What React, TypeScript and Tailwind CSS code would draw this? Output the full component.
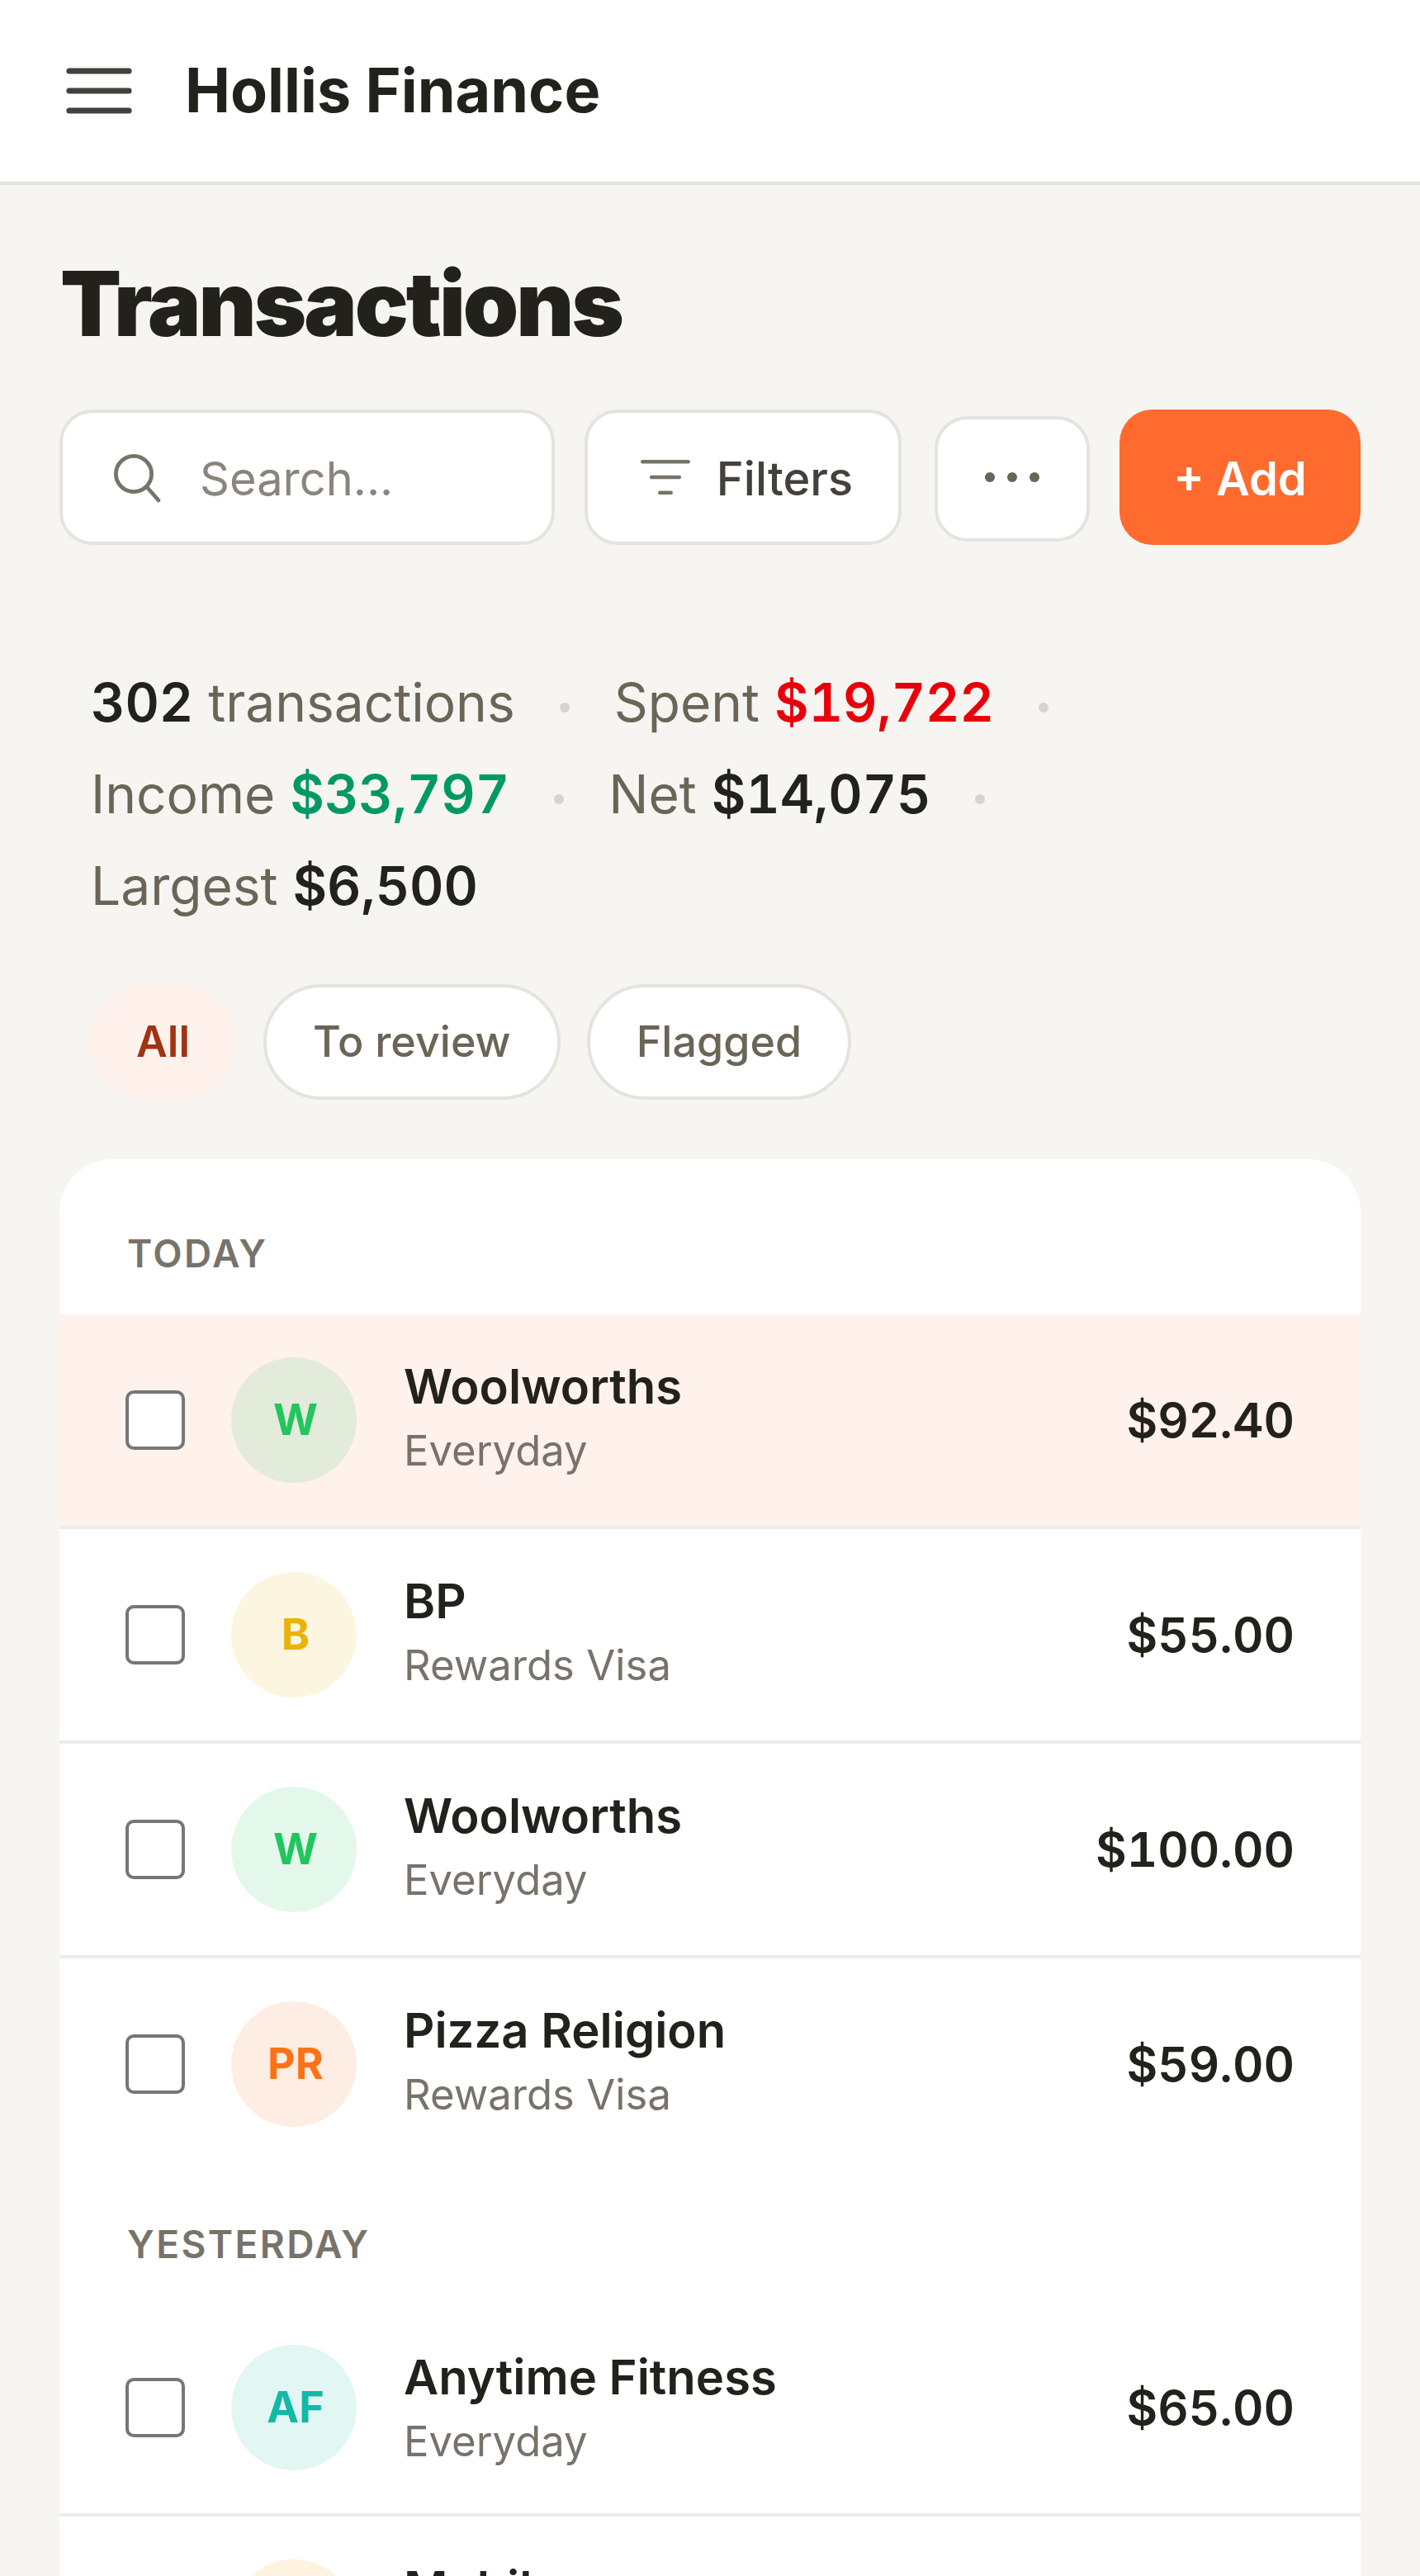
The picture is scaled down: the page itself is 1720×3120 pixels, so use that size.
const font = { fontFamily: "Inter, sans-serif" };

type Row = { initials: string; name: string; sub: string; amount: string; text: string; tint: string; row?: string; shift?: string };

function TxRow({ r, last }: { r: Row; last?: boolean }) {
  return (
    <div className={`flex items-center gap-3 px-5 py-[13px] ${last ? "" : "border-b border-[#eeece8]"} ${r.row ?? ""}`}>
      <input type="checkbox" className="w-[18px] h-[18px] m-0 shrink-0" readOnly />
      <div className={`ml-[2px] pl-[1px] w-[38px] h-[38px] rounded-full flex items-center justify-center text-[13px] font-bold shrink-0 ${r.text} ${r.tint}`}>{r.initials}</div>
      <div className={`flex-1 ml-[2.25px] min-w-0 self-start ${r.shift ?? "-mt-[0.75px]"}`}>
        <div className="text-[14.5px] leading-[19px] font-semibold text-[#22211c]">{r.name}</div>
        <div className="text-[12.7px] leading-[17px] text-[#78736a] mt-[1.5px]">{r.sub}</div>
      </div>
      <div className="text-[14.5px] font-semibold text-[#22211c] tabular-nums">{r.amount}</div>
    </div>
  );
}

const today: Row[] = [
  { initials: "W", name: "Woolworths", sub: "Everyday", amount: "$92.40", text: "text-[#22c55e]", tint: "bg-[#22c55e]/[0.125]", row: "bg-[#fff1ec]" },
  { initials: "B", name: "BP", sub: "Rewards Visa", amount: "$55.00", text: "text-[#eab308]", tint: "bg-[#eab308]/[0.125]" },
  { initials: "W", name: "Woolworths", sub: "Everyday", amount: "$100.00", text: "text-[#22c55e]", tint: "bg-[#22c55e]/[0.125]" },
];
const pizza: Row = { initials: "PR", name: "Pizza Religion", sub: "Rewards Visa", amount: "$59.00", text: "text-[#f97316]", tint: "bg-[#f97316]/[0.125]" };
const yesterday: Row[] = [
  { initials: "AF", name: "Anytime Fitness", sub: "Everyday", amount: "$65.00", text: "text-[#14b8a6]", tint: "bg-[#14b8a6]/[0.125]", shift: "mt-[0.25px]" },
  { initials: "M", name: "Mobil", sub: "Rewards Visa", amount: "$48.00", text: "text-[#f59e0b]", tint: "bg-[#f59e0b]/[0.125]" },
];

function Dot() {
  return <span className="inline-block w-[3px] h-[3px] rounded-full bg-[#d6d3d1] align-middle mx-[9px]" />;
}

export default function App() {
  return (
    <div className="bg-[#f6f5f1] w-full h-[3120px] overflow-hidden" style={font}>
      <div className="[zoom:4] w-[430px] h-[780px] text-[#22211c]">
        <header className="h-[56px] bg-white border-b border-[#e5e3de] flex items-center px-5 gap-4">
          <svg width="20" height="14" viewBox="0 0 20 14" fill="none" stroke="#44403c" strokeWidth="1.8" strokeLinecap="round">
            <path d="M1 1h18M1 7h18M1 13h18" />
          </svg>
          <div className="text-[18.4px] font-bold">Hollis Finance</div>
        </header>
        <main className="px-[18px]">
          <h1 className="text-[27px] font-black tracking-[-0.75px] leading-[32px] mt-[20px] pl-[0.25px]">Transactions</h1>
          <div className="flex items-center gap-[9px] mt-[16px]">
            <div className="w-[150px] h-[41px] bg-white border border-[#e5e3de] rounded-[10px] flex items-center pl-[14.5px] gap-[11px]">
              <svg width="16" height="16" viewBox="0 0 16 16" fill="none" stroke="#78736a" strokeWidth="1.2" strokeLinecap="round">
                <circle cx="7" cy="7" r="5.4" />
                <path d="M11 11l3.5 4" />
              </svg>
              <span className="text-sm text-[#8a857c] pt-[1px]">Search...</span>
            </div>
            <div className="h-[41px] w-[96px] bg-white border border-[#e5e3de] rounded-[10px] flex items-center justify-center gap-2 pl-[2.25px]">
              <svg width="15" height="12" viewBox="0 0 16 12" fill="none" stroke="#78736a" strokeWidth="1.2" strokeLinecap="round">
                <path d="M.6 1h14.8M3.5 6h9M6.2 11h3.6" />
              </svg>
              <span className="text-sm font-medium text-[#44403c] pt-[1px]">Filters</span>
            </div>
            <div className="ml-[1px] mt-[1px] h-[38px] w-[47px] bg-white border border-[#e5e3de] rounded-[10px] flex items-center justify-center gap-[3.75px] pb-[1px] shrink-0">
              <span className="w-[3px] h-[3px] rounded-full bg-[#6b6558]" />
              <span className="w-[3px] h-[3px] rounded-full bg-[#6b6558]" />
              <span className="w-[3px] h-[3px] rounded-full bg-[#6b6558]" />
            </div>
            <div className="h-[41px] w-[73px] pt-[1px] bg-[#ff6b2e] rounded-[10px] flex items-center justify-center text-sm font-semibold text-white shrink-0">+ Add</div>
          </div>
          <div className="mt-[33.75px] pl-[9.5px] text-base leading-[27.75px] text-[#6b6558] w-[340px]">
            <span className="font-semibold text-[#22211c] tabular-nums">302</span> transactions <Dot /> Spent <span className="font-semibold text-[#e7000b] tabular-nums">$19,722</span> <Dot /> Income <span className="font-semibold text-[#009966] tabular-nums">$33,797</span> <Dot /> Net <span className="font-semibold text-[#22211c] tabular-nums">$14,075</span> <Dot /> Largest <span className="font-semibold text-[#22211c] tabular-nums">$6,500</span>
          </div>
          <div className="flex gap-[8px] mt-[16px] pl-[9px]">
            <div className="h-[35px] px-[14.25px] rounded-full bg-[#fff1ec] text-[#9f3413] text-[13px] font-semibold flex items-center">All</div>
            <div className="h-[35px] px-[14px] rounded-full bg-white border border-[#e5e3de] text-[#6b6558] text-[13px] font-medium flex items-center">To review</div>
            <div className="h-[35px] px-[14px] rounded-full bg-white border border-[#e5e3de] text-[#6b6558] text-[13px] font-medium flex items-center">Flagged</div>
          </div>
          <div className="mt-[18px] bg-white rounded-[16px] overflow-hidden">
            <div className="pl-[20.5px] pt-[20.5px] pb-[10.5px] text-[11.5px] leading-[16px] font-semibold tracking-[0.6px] text-[#78736a]">TODAY</div>
            {today.map((r, i) => <TxRow key={i} r={r} />)}
            <TxRow r={pizza} last />
            <div className="pl-[20.5px] pt-[14.5px] pb-[9.5px] text-[11.5px] leading-[16px] font-semibold tracking-[0.6px] text-[#78736a]">YESTERDAY</div>
            {yesterday.map((r, i) => <TxRow key={i} r={r} />)}
          </div>
        </main>
      </div>
    </div>
  );
}
